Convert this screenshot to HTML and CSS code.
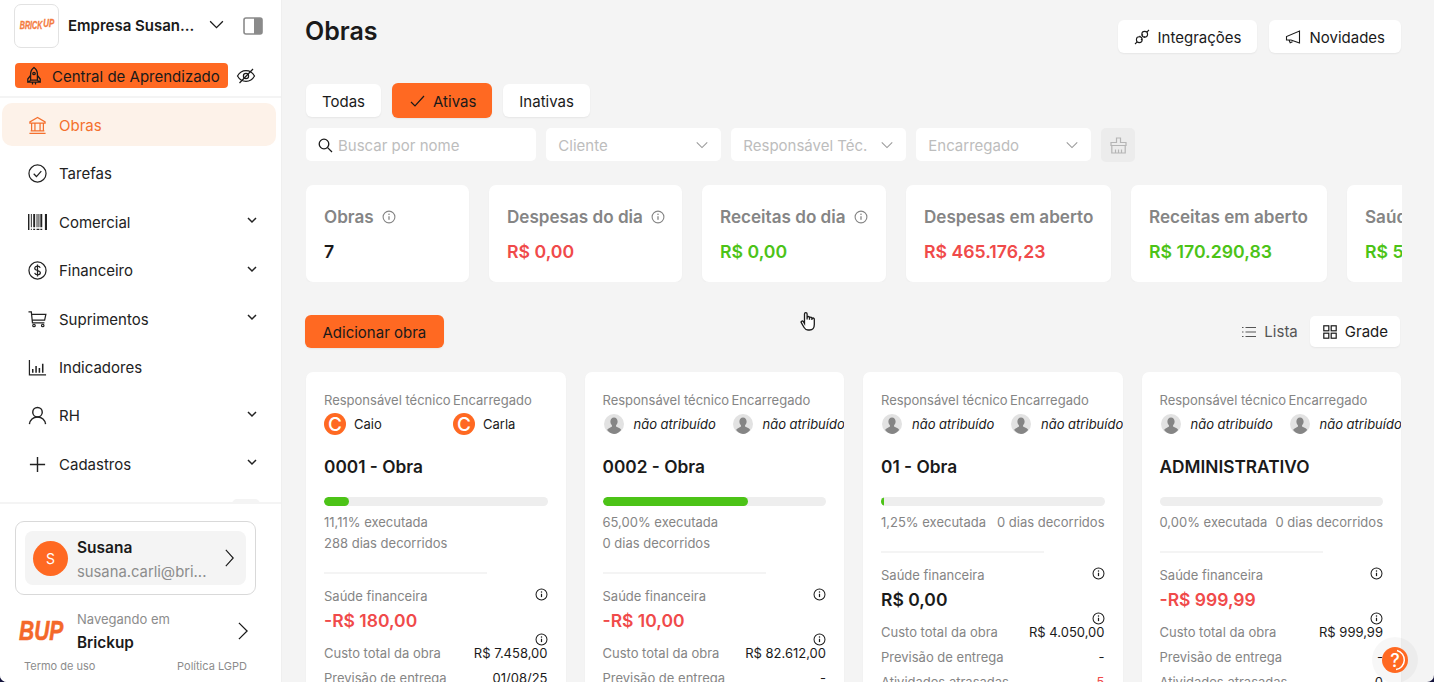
FILE: index.html
```html
<!DOCTYPE html>
<html lang="pt-BR">
<head>
  <meta charset="UTF-8">
  <title>Obras</title>
  <link rel="stylesheet" href="styles.css">
</head>
<body>
  <svg class="defs" width="0" height="0">
    <symbol id="info" viewBox="0 0 14 14"><circle cx="7" cy="7" r="5.9" fill="none" stroke="currentColor" stroke-width="1.1"/><path d="M7 6.2v3.6" stroke="currentColor" stroke-width="1.3"/><circle cx="7" cy="4.2" r=".8" fill="currentColor"/></symbol>
    <symbol id="caret" viewBox="0 0 12 12"><path d="M2 4l4 4 4-4" fill="none" stroke="currentColor" stroke-width="1.5"/></symbol>
    <symbol id="down" viewBox="0 0 16 16"><path d="M2 5l6 6 6-6" fill="none" stroke="currentColor" stroke-width="1.2"/></symbol>
    <symbol id="right" viewBox="2 2 11 20" preserveAspectRatio="none"><path d="M3 3l9 9-9 9" fill="none" stroke="currentColor" stroke-width="1.4"/></symbol>
    <symbol id="nobody" viewBox="0 0 20 20"><circle cx="10" cy="10" r="10" fill="#e2e2e2"/><path d="M10 3.6c2.2 0 3.6 1.8 3.6 4 0 1.6-.7 3-1.6 3.8v1.2l3.6 1.6c.8.4 1.3.9 1.5 1.7A10 10 0 0 1 10 20a10 10 0 0 1-6.9-3.9c.2-.8.7-1.3 1.5-1.7L8 12.6v-1.2c-.9-.8-1.6-2.2-1.6-3.8 0-2.2 1.4-4 3.6-4z" fill="#858585"/></symbol>
  </svg>

  <div class="app">
    <aside class="sidebar">
      <div class="company">
        <div class="company-logo"><span class="logo-mark"><span>BRICK</span><span class="up">UP</span></span></div>
        <span class="company-name">Empresa Susan...</span>
        <svg class="company-caret" width="17" height="17"><use href="#down"/></svg>
        <svg class="panel-icon" width="20" height="18" viewBox="0 0 20 18"><rect x="1" y="1" width="18" height="16" rx="2" fill="#fff" stroke="#8a8a8a" stroke-width="1.6"/><path d="M11 1h6a2 2 0 0 1 2 2v12a2 2 0 0 1-2 2h-6z" fill="#8a8a8a"/></svg>
      </div>
      <div class="learn-row">
        <a class="learn-btn">
          <svg width="18" height="20" viewBox="0 0 18 20" fill="none" stroke="#1a1a1a" stroke-width="1.3"><path d="M9 1.5c2.4 1.700 3.400 4 3.400 6.600v6H5.600v-6C5.600 5.500 6.600 3.200 9 1.500z"/><path d="M5.600 9.500L2.800 13v3l2.800-1.500M12.400 9.500l2.800 3.500v3l-2.800-1.500M2.800 16.200h12.400M7.500 16.500v2M10.500 16.500v2"/><circle cx="9" cy="7.500" r="1.200"/></svg>
          <span>Central de Aprendizado</span>
        </a>
        <svg width="20" height="18" viewBox="0 0 20 18" fill="none" stroke="#1a1a1a" stroke-width="1.2"><path d="M1.500 9c2-3.600 5-5.400 8.500-5.400S16.500 5.400 18.500 9c-2 3.600-5 5.400-8.500 5.400S3.500 12.600 1.500 9z"/><circle cx="10" cy="9" r="2.600"/><path d="M3.500 16L17 2"/></svg>
      </div>

      <nav class="nav">
        <a class="nav-item active">
          <svg class="nav-icon" viewBox="0 0 20 20" fill="none" stroke="currentColor" stroke-width="1.3"><path d="M10 1.500L2 6.200v1.300h16V6.200zM3.800 7.500v8M7.300 7.500v8M12.700 7.500v8M16.200 7.500v8M2.800 15.700h14.400M1.500 18.300h17"/></svg>
          Obras
        </a>
        <a class="nav-item">
          <svg class="nav-icon" viewBox="0 0 20 20" fill="none" stroke="currentColor" stroke-width="1.3"><circle cx="10" cy="10" r="9"/><path d="M6 10.300l2.900 2.900L14 7.500"/></svg>
          Tarefas
        </a>
        <a class="nav-item">
          <svg class="nav-icon" viewBox="0 0 20 20" fill="currentColor"><path d="M0 1h1.500v17H0zM3 1h1v14H3zM5.500 1h2v14h-2zM9 1h1v14H9zM11 1h1v14h-1zM13 1h2v14h-2zM17.800 1H20v17h-2.200zM3 16.500h1V18H3zM5.500 16.500h2V18h-2zM9 16.500h3V18H9zM13 16.500h2V18h-2z"/></svg>
          Comercial
          <svg class="nav-caret" width="12" height="12"><use href="#caret"/></svg>
        </a>
        <a class="nav-item">
          <svg class="nav-icon" viewBox="0 0 20 20" fill="none" stroke="currentColor" stroke-width="1.3"><circle cx="10" cy="10" r="9"/><path d="M12.800 7.300c-.3-1.200-1.400-1.900-2.800-1.900-1.600 0-2.900.9-2.900 2.200 0 3.100 5.900 1.700 5.900 4.800 0 1.300-1.300 2.200-3 2.200-1.500 0-2.700-.8-3-2M10 3.800v12.400"/></svg>
          Financeiro
          <svg class="nav-caret" width="12" height="12"><use href="#caret"/></svg>
        </a>
        <a class="nav-item">
          <svg class="nav-icon" viewBox="0 0 20 20" fill="none" stroke="currentColor" stroke-width="1.3"><path d="M.5 2h3l1.200 11.500h12.600M3.800 4.500h15l-1.300 6.200H4.400"/><circle cx="6.300" cy="16.300" r="1.300"/><circle cx="15.500" cy="16.300" r="1.300"/></svg>
          Suprimentos
          <svg class="nav-caret" width="12" height="12"><use href="#caret"/></svg>
        </a>
        <a class="nav-item">
          <svg class="nav-icon" viewBox="0 0 20 20" fill="none" stroke="currentColor" stroke-width="1.3"><path d="M1.500 2v15.800h17.500"/><path d="M5 11.500v4M8.500 8.500v7M12 10.500v5M15.500 6v9.500" stroke-width="1.6"/></svg>
          Indicadores
        </a>
        <a class="nav-item">
          <svg class="nav-icon" viewBox="0 0 20 20" fill="none" stroke="currentColor" stroke-width="1.5"><circle cx="10" cy="6.500" r="5"/><path d="M1.500 19c.5-4.300 3.900-7.500 8.500-7.500s8 3.200 8.500 7.500"/></svg>
          RH
          <svg class="nav-caret" width="12" height="12"><use href="#caret"/></svg>
        </a>
        <a class="nav-item">
          <svg class="nav-icon" viewBox="0 0 20 20" fill="none" stroke="currentColor" stroke-width="1.5"><path d="M10 2v16M2 10h16"/></svg>
          Cadastros
          <svg class="nav-caret" width="12" height="12"><use href="#caret"/></svg>
        </a>
        <a class="nav-item"><span class="nav-badge"></span></a>
      </nav>

      <div class="sidebar-foot">
        <div class="user-box">
          <div class="user-inner">
            <span class="user-avatar">S</span>
            <div class="user-text">
              <strong>Susana</strong>
              <span>susana.carli@bri...</span>
            </div>
            <svg class="user-arrow" width="9" height="18"><use href="#right"/></svg>
          </div>
        </div>
        <div class="tenant">
          <span class="tenant-logo">BUP</span>
          <div class="tenant-text">
            <span>Navegando em</span>
            <strong>Brickup</strong>
          </div>
          <svg class="tenant-arrow" width="10" height="18"><use href="#right"/></svg>
        </div>
        <div class="legal">
          <span>Termo de uso</span>
          <span>Política LGPD</span>
        </div>
      </div>
    </aside>

    <main class="main">
      <header class="top">
        <h1>Obras</h1>
        <div class="top-actions">
          <a class="btn">
            <svg width="16" height="16" viewBox="0 0 16 16" fill="none" stroke="#1a1a1a" stroke-width="1.1"><circle cx="5.300" cy="10.700" r="2.900"/><circle cx="10.700" cy="5.300" r="2.900"/><path d="M1 15l2.200-2.200M15 1l-2.200 2.200M5.500 7l1 1M8 5.500l1 1M7 11l1-1M10 8.500l1-1"/></svg>
            Integrações
          </a>
          <a class="btn">
            <svg width="16" height="16" viewBox="0 0 16 16" fill="none" stroke="#1a1a1a" stroke-width="1.1"><path d="M14.500 2v12L6 11H1.500V7.500L14.500 2zM4 11l1.200 2.800 2.300-1"/></svg>
            Novidades
          </a>
        </div>
      </header>

      <div class="tabs">
        <a class="btn">Todas</a>
        <a class="btn btn-primary">
          <svg width="15" height="15" viewBox="0 0 15 15" fill="none" stroke="#1a1a1a" stroke-width="1.2"><path d="M1 8l4 4 9-10"/></svg>
          Ativas
        </a>
        <a class="btn">Inativas</a>
      </div>

      <div class="filters">
        <div class="field field-search">
          <svg width="15" height="15" viewBox="0 0 15 15" fill="none" stroke="#1a1a1a" stroke-width="1.3"><circle cx="6" cy="6" r="4.800"/><path d="M9.600 9.600L14 14"/></svg>
          Buscar por nome
        </div>
        <div class="field field-select">Cliente<svg width="14" height="14"><use href="#down"/></svg></div>
        <div class="field field-select">Responsável Téc.<svg width="14" height="14"><use href="#down"/></svg></div>
        <div class="field field-select">Encarregado<svg width="14" height="14"><use href="#down"/></svg></div>
        <div class="broom">
          <svg width="17" height="17" viewBox="0 0 17 17" fill="none" stroke="#b5b5b5" stroke-width="1.2"><path d="M6.500 1h4v4.500h5.500v3H1v-3h5.500zM1.800 8.500V16h13.400V8.500M5.500 12.500V16M8.500 12.500V16M11.500 12.500V16"/></svg>
        </div>
      </div>

      <section class="stats">
        <div class="stat stat-a"><h3>Obras <svg width="14" height="14"><use href="#info"/></svg></h3><p>7</p></div>
        <div class="stat stat-b"><h3>Despesas do dia <svg width="14" height="14"><use href="#info"/></svg></h3><p class="red">R$ 0,00</p></div>
        <div class="stat stat-c"><h3>Receitas do dia <svg width="14" height="14"><use href="#info"/></svg></h3><p class="green">R$ 0,00</p></div>
        <div class="stat stat-d"><h3>Despesas em aberto</h3><p class="red">R$ 465.176,23</p></div>
        <div class="stat stat-e"><h3>Receitas em aberto</h3><p class="green">R$ 170.290,83</p></div>
        <div class="stat stat-f"><h3>Saúde financeira</h3><p class="green">R$ 5.000,00</p></div>
      </section>

      <div class="toolbar">
        <a class="btn btn-primary btn-add">Adicionar obra</a>
        <div class="views">
          <a class="view">
            <svg width="14" height="14" viewBox="0 0 14 14" fill="none" stroke="#555" stroke-width="1.1"><path d="M3.500 2.500H14M3.500 7H14M3.500 11.500H14M0 2.500h1.500M0 7h1.500M0 11.500h1.500"/></svg>
            Lista
          </a>
          <a class="view view-on">
            <svg width="14" height="14" viewBox="0 0 14 14" fill="none" stroke="#1a1a1a" stroke-width="1.2"><rect x=".8" y=".8" width="5" height="5"/><rect x="8.200" y=".8" width="5" height="5"/><rect x=".8" y="8.200" width="5" height="5"/><rect x="8.200" y="8.200" width="5" height="5"/></svg>
            Grade
          </a>
        </div>
      </div>

      <section class="grid">
        <article class="card">
          <div class="people">
            <div><label>Responsável técnico</label><div class="person"><span class="letter">C</span>Caio</div></div>
            <div><label>Encarregado</label><div class="person"><span class="letter">C</span>Carla</div></div>
          </div>
          <h2>0001 - Obra</h2>
          <div class="bar"><i style="width:11.11%"></i></div>
          <div class="progress wrap"><span>11,11% executada</span><span>288 dias decorridos</span></div>
          <hr>
          <div class="health"><label>Saúde financeira</label><svg width="13" height="13"><use href="#info"/></svg></div>
          <div class="money red">-R$ 180,00</div>
          <div class="row row-cost"><label>Custo total da obra</label><div class="cost"><svg width="13" height="13"><use href="#info"/></svg><span>R$ 7.458,00</span></div></div>
          <div class="row"><label>Previsão de entrega</label><span>01/08/25</span></div>
        </article>

        <article class="card">
          <div class="people">
            <div><label>Responsável técnico</label><div class="person none"><svg width="20" height="20"><use href="#nobody"/></svg>não atribuído</div></div>
            <div><label>Encarregado</label><div class="person none"><svg width="20" height="20"><use href="#nobody"/></svg>não atribuído</div></div>
          </div>
          <h2>0002 - Obra</h2>
          <div class="bar"><i style="width:65%"></i></div>
          <div class="progress wrap"><span>65,00% executada</span><span>0 dias decorridos</span></div>
          <hr>
          <div class="health"><label>Saúde financeira</label><svg width="13" height="13"><use href="#info"/></svg></div>
          <div class="money red">-R$ 10,00</div>
          <div class="row row-cost"><label>Custo total da obra</label><div class="cost"><svg width="13" height="13"><use href="#info"/></svg><span>R$ 82.612,00</span></div></div>
          <div class="row"><label>Previsão de entrega</label><span>-</span></div>
        </article>

        <article class="card">
          <div class="people">
            <div><label>Responsável técnico</label><div class="person none"><svg width="20" height="20"><use href="#nobody"/></svg>não atribuído</div></div>
            <div><label>Encarregado</label><div class="person none"><svg width="20" height="20"><use href="#nobody"/></svg>não atribuído</div></div>
          </div>
          <h2>01 - Obra</h2>
          <div class="bar"><i style="width:1.25%"></i></div>
          <div class="progress"><span>1,25% executada</span><span>0 dias decorridos</span></div>
          <hr>
          <div class="health"><label>Saúde financeira</label><svg width="13" height="13"><use href="#info"/></svg></div>
          <div class="money">R$ 0,00</div>
          <div class="row row-cost"><label>Custo total da obra</label><div class="cost"><svg width="13" height="13"><use href="#info"/></svg><span>R$ 4.050,00</span></div></div>
          <div class="row"><label>Previsão de entrega</label><span>-</span></div>
          <div class="row"><label>Atividades atrasadas</label><span class="red">5</span></div>
        </article>

        <article class="card">
          <div class="people">
            <div><label>Responsável técnico</label><div class="person none"><svg width="20" height="20"><use href="#nobody"/></svg>não atribuído</div></div>
            <div><label>Encarregado</label><div class="person none"><svg width="20" height="20"><use href="#nobody"/></svg>não atribuído</div></div>
          </div>
          <h2>ADMINISTRATIVO</h2>
          <div class="bar"></div>
          <div class="progress"><span>0,00% executada</span><span>0 dias decorridos</span></div>
          <hr>
          <div class="health"><label>Saúde financeira</label><svg width="13" height="13"><use href="#info"/></svg></div>
          <div class="money red">-R$ 999,99</div>
          <div class="row row-cost"><label>Custo total da obra</label><div class="cost"><svg width="13" height="13"><use href="#info"/></svg><span>R$ 999,99</span></div></div>
          <div class="row"><label>Previsão de entrega</label><span>-</span></div>
          <div class="row"><label>Atividades atrasadas</label><span>0</span></div>
        </article>
      </section>
    </main>

    <a class="help">
      ?
      <svg class="help-arc" width="26" height="26" viewBox="0 0 26 26" fill="none" stroke="#fff" stroke-width="1.5"><path d="M15 3.500a9.700 9.700 0 0 1-1 19"/></svg>
    </a>
    <svg class="hand" width="16" height="21" viewBox="0 0 16 21" fill="#fff" stroke="#1a1a1a" stroke-width="1.3"><path d="M4.500 12.500V3a1.300 1.300 0 0 1 2.600 0v5.500-1.800a1.200 1.200 0 0 1 2.400 0v2-1.300a1.200 1.200 0 0 1 2.400 0v1.500-.7a1.200 1.200 0 0 1 2.400 0v5.300c0 3-1.700 5.500-4.700 5.500H8c-1.800 0-3-1-3.900-2.500L1.300 11.700c-.7-1.300 1-2.300 2-1.300z"/></svg>
  </div>
</body>
</html>
```

FILE: styles.css
```css
* {
  box-sizing: border-box;
}

html, body {
  margin: 0;
  height: 100%;
  overflow: hidden;
  background: #14143c;
}

body {
  font-family: Inter, "Noto Sans", sans-serif;
  color: #1a1a1a;
  font-size: 14px;
}

a {
  color: inherit;
  text-decoration: none;
}

.defs {
  position: absolute;
}

.app {
  position: relative;
  display: flex;
  height: 682px;
  background: #f4f4f4;
  border-radius: 0 0 7px 7px;
  overflow: hidden;
}

.red { color: #f04a4a; }
.green { color: #4cc317; }

/* sidebar */
.sidebar {
  width: 282px;
  flex: none;
  background: #fff;
  border-right: 1px solid #efefef;
  display: flex;
  flex-direction: column;
}

.company {
  height: 51px;
  display: flex;
  align-items: center;
  padding-left: 14px;
}

.company-logo {
  width: 45px;
  height: 44px;
  flex: none;
  border: 1px solid #e2e2e2;
  border-radius: 7px;
  display: flex;
  align-items: center;
  justify-content: center;
}

.logo-mark {
  display: flex;
  align-items: center;
  font-family: "Liberation Sans", sans-serif;
  font-size: 10px;
  font-weight: 700;
  font-style: italic;
  color: #f47b3f;
  -webkit-text-stroke: .3px #f47b3f;
  transform: scaleX(.72);
}

.logo-mark .up {
  font-size: 11px;
  margin: -5px 0 0 1px;
}

.company-name {
  margin-left: 9px;
  width: 140px;
  font-size: 15px;
  font-weight: 600;
  white-space: nowrap;
}

.company-caret {
  margin-top: -2px;
}

.panel-icon {
  margin-left: 18px;
}

.learn-row {
  height: 47px;
  padding: 12px 0 0 15px;
  display: flex;
  align-items: flex-start;
  gap: 8px;
  border-bottom: 2px solid #f4f4f4;
}

.learn-row > svg {
  margin-top: 4px;
}

.learn-btn {
  width: 213px;
  height: 25px;
  border-radius: 4px;
  background: #ff6922;
  display: flex;
  align-items: center;
  gap: 9px;
  padding-left: 10px;
  font-size: 15px;
  white-space: nowrap;
}

.learn-btn span {
  padding-top: 1px;
}

.nav {
  flex: 1;
  padding: 5px 5px 0 2px;
  overflow: hidden;
}

.nav-item {
  height: 43px;
  margin-bottom: 5.4px;
  border-radius: 10px;
  display: flex;
  align-items: center;
  padding: 2px 0 0 26px;
  gap: 12px;
  font-size: 15px;
  color: #222;
}

.nav-item.active {
  background: #fdf2e9;
  color: #f4702e;
}

.nav-icon {
  width: 19px;
  height: 19px;
  flex: none;
}

.nav-caret {
  margin-left: auto;
  margin-right: 18px;
  margin-top: -4px;
}

.nav-badge {
  width: 28px;
  height: 26px;
  margin: -2px 16px 0 auto;
  border-radius: 5px;
  background: #f4f4f4;
}

.sidebar-foot {
  height: 180px;
  flex: none;
  border-top: 2px solid #f4f4f4;
  padding: 17px 0 0 15px;
}

.user-box {
  width: 241px;
  height: 74px;
  border: 1px solid #d9d9d9;
  border-radius: 9px;
  padding: 9px;
}

.user-inner {
  height: 54px;
  background: #f4f4f4;
  border-radius: 8px;
  display: flex;
  align-items: center;
  padding: 0 12px 0 8px;
}

.user-avatar {
  width: 35px;
  height: 35px;
  flex: none;
  border-radius: 50%;
  background: #ff6922;
  color: #fff;
  display: flex;
  align-items: center;
  justify-content: center;
  font-size: 14px;
}

.user-text {
  margin-left: 9px;
  padding-top: 2px;
  display: flex;
  flex-direction: column;
  gap: 6px;
}

.user-text strong {
  font-weight: 600;
  font-size: 15.5px;
}

.user-text span {
  color: #8c8c8c;
  font-size: 14.8px;
  white-space: nowrap;
}

.user-arrow {
  margin-left: auto;
}

.tenant {
  display: flex;
  align-items: center;
  margin-top: 12px;
  padding-left: 4px;
  height: 48px;
}

.tenant-logo {
  width: 44px;
  font-family: "Liberation Sans", sans-serif;
  font-size: 28px;
  font-weight: 700;
  font-style: italic;
  color: #f4682a;
  -webkit-text-stroke: .6px #f4682a;
  transform: scaleX(.75);
  transform-origin: left center;
}

.tenant-text {
  margin-left: 14px;
  display: flex;
  flex-direction: column;
  gap: 6px;
}

.tenant-text span {
  font-size: 13px;
  color: #8c8c8c;
}

.tenant-text strong {
  font-size: 15.3px;
  font-weight: 600;
}

.tenant-arrow {
  margin-left: auto;
  margin-right: 33px;
}

.legal {
  display: flex;
  justify-content: space-between;
  width: 232px;
  margin-top: 4px;
  padding-left: 9px;
  font-size: 11px;
  color: #8c8c8c;
}

/* main */
.main {
  flex: 1;
  min-width: 0;
  padding: 0 32px 0 24px;
}

.top {
  height: 84px;
  display: flex;
  justify-content: space-between;
  align-items: flex-start;
}

h1 {
  margin: 16px 0 0 -1px;
  font-size: 25px;
  line-height: 30px;
  font-weight: 600;
}

.top-actions {
  display: flex;
  gap: 12px;
  margin: 20px 1px 0 0;
}

.btn {
  height: 33px;
  padding: 1px 16px 0;
  background: #fff;
  border-radius: 6px;
  display: flex;
  align-items: center;
  gap: 8px;
  font-size: 15px;
  box-shadow: 0 1px 2px rgba(0, 0, 0, .06);
  white-space: nowrap;
}

.btn-primary {
  background: #ff6922;
}

.tabs {
  display: flex;
  gap: 11px;
}

.tabs .btn-primary {
  padding: 1px 16px 0 18px;
  height: 35px;
  margin-top: -1px;
}

.filters {
  display: flex;
  margin-top: 10px;
  gap: 10.3px;
}

.field {
  height: 33px;
  background: #fff;
  border-radius: 5px;
  display: flex;
  align-items: center;
  justify-content: space-between;
  padding: 1px 12px 0;
  font-size: 15px;
  color: #bdbdbd;
  white-space: nowrap;
}

.field svg {
  color: #999;
}

.field-search {
  width: 230px;
  justify-content: flex-start;
  gap: 5px;
}

.field-select {
  width: 174.7px;
}

.broom {
  width: 34px;
  height: 34px;
  border-radius: 5px;
  background: #ececec;
  display: flex;
  align-items: center;
  justify-content: center;
}

.stats {
  display: flex;
  gap: 20px;
  margin-top: 23px;
  overflow: hidden;
}

.stat {
  flex: none;
  height: 97px;
  background: #fff;
  border-radius: 7px;
  padding: 22px 18px 0;
  box-shadow: 0 1px 2px rgba(0, 0, 0, .03);
}

.stat-a { width: 163px; }
.stat-b { width: 193px; }
.stat-c { width: 184px; }
.stat-d { width: 205px; }
.stat-e { width: 196px; }
.stat-f { width: 195px; }

.stat h3 {
  margin: 0;
  font-size: 17.1px;
  line-height: 20px;
  font-weight: 600;
  color: #858585;
  display: flex;
  align-items: center;
  gap: 8px;
  white-space: nowrap;
}

.stat h3 svg {
  flex: none;
}

.stat p {
  margin: 14px 0 0;
  font-size: 17.7px;
  line-height: 22px;
  font-weight: 600;
}

.toolbar {
  display: flex;
  justify-content: space-between;
  align-items: center;
  margin-top: 33px;
}

.btn-add {
  margin-left: -1px;
  padding: 1px 17.5px 0;
}

.views {
  display: flex;
  align-items: center;
  gap: 12px;
  margin-right: 2px;
}

.view {
  height: 31px;
  display: flex;
  align-items: center;
  gap: 8px;
  font-size: 15px;
  color: #555;
}

.view-on {
  background: #fff;
  border-radius: 5px;
  padding: 0 12px 0 13px;
  color: #1a1a1a;
  box-shadow: 0 1px 2px rgba(0, 0, 0, .06);
}

.grid {
  display: grid;
  grid-template-columns: repeat(4, 259.5px);
  gap: 19px;
  margin-top: 24px;
}

.card {
  height: 420px;
  background: #fff;
  border-radius: 7px;
  padding: 18px 18px 0;
  overflow: hidden;
  box-shadow: 0 1px 2px rgba(0, 0, 0, .03);
}

.card label {
  display: block;
  color: #858585;
  font-size: 13px;
  line-height: 20px;
  white-space: nowrap;
}

.people {
  display: grid;
  grid-template-columns: 129px 1fr;
}

.person {
  display: flex;
  align-items: center;
  gap: 8px;
  margin-top: 3px;
  height: 22px;
  font-size: 13px;
  white-space: nowrap;
}

.person.none {
  font-style: italic;
  gap: 10px;
  padding-left: 1px;
}

.letter {
  width: 22px;
  height: 22px;
  border-radius: 50%;
  background: #ff6922;
  color: #fff;
  display: flex;
  align-items: center;
  justify-content: center;
  font-size: 19px;
  font-weight: 500;
}

.card h2 {
  margin: 20px 0 0;
  font-size: 17.3px;
  line-height: 24px;
  font-weight: 600;
}

.bar {
  height: 9px;
  margin-top: 18px;
  background: #eee;
  border-radius: 5px;
  overflow: hidden;
}

.bar i {
  display: block;
  height: 100%;
  background: #4cc317;
  border-radius: 5px;
}

.progress {
  margin-top: 6px;
  display: flex;
  justify-content: space-between;
  font-size: 13px;
  line-height: 21px;
  color: #858585;
  white-space: nowrap;
}

.progress.wrap {
  flex-direction: column;
}

.card hr {
  width: 163px;
  height: 2px;
  margin: 18px 0 0;
  border: 0;
  background: #f4f4f4;
}

.health {
  margin-top: 12px;
  display: flex;
  justify-content: space-between;
  align-items: flex-start;
  height: 20px;
}

.health svg {
  margin-top: 2px;
}

.money {
  margin-top: 3px;
  font-size: 17.5px;
  line-height: 24px;
  font-weight: 600;
}

.row {
  display: flex;
  justify-content: space-between;
  align-items: flex-end;
  margin-top: 5px;
  font-size: 13px;
  line-height: 20px;
}

.row-cost {
  margin-top: 0;
}

.cost {
  display: flex;
  flex-direction: column;
  align-items: flex-end;
}

.cost svg {
  margin-bottom: -3px;
}

.help {
  position: absolute;
  left: 1382px;
  top: 647px;
  width: 26px;
  height: 26px;
  border-radius: 50%;
  background: #ff6922;
  color: #fff;
  font-size: 18px;
  font-weight: 500;
  display: flex;
  align-items: center;
  justify-content: center;
  box-shadow: 0 0 0 10px rgba(0, 0, 0, .03);
}

.help-arc {
  position: absolute;
  left: 0;
  top: 0;
}

.hand {
  position: absolute;
  left: 800px;
  top: 311px;
}
```
